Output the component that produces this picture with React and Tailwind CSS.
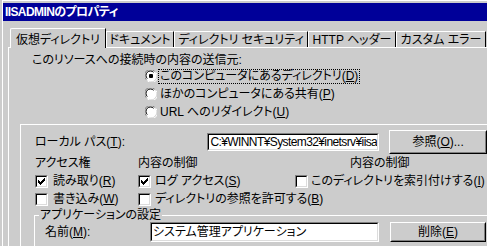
import React from "react";

const Check = ({ checked }) => (
  <span className="flex w-[13px] h-[13px] shrink-0 border border-t-[#808080] border-l-[#808080] border-r-white border-b-white">
    <span className="flex flex-1 items-center justify-center bg-white border border-t-black border-l-black border-r-[#dcdcdc] border-b-[#dcdcdc]">
      {checked && (
        <svg width="7" height="7" viewBox="0 0 7 7" shapeRendering="crispEdges">
          <rect x="6" y="0" width="1" height="1" fill="#000" />
          <rect x="5" y="1" width="2" height="1" fill="#000" />
          <rect x="0" y="2" width="1" height="1" fill="#000" />
          <rect x="4" y="2" width="3" height="1" fill="#000" />
          <rect x="0" y="3" width="2" height="1" fill="#000" />
          <rect x="3" y="3" width="3" height="1" fill="#000" />
          <rect x="0" y="4" width="5" height="1" fill="#000" />
          <rect x="1" y="5" width="3" height="1" fill="#000" />
          <rect x="2" y="6" width="1" height="1" fill="#000" />
        </svg>
      )}
    </span>
  </span>
);

const Radio = ({ checked }) => (
  <svg width="12" height="12" viewBox="0 0 12 12" className="shrink-0">
    <circle cx="6" cy="6" r="5.5" fill="#ffffff" />
    <path d="M1.2 9.6 A5.5 5.5 0 0 1 9.6 1.2" stroke="#808080" strokeWidth="1" fill="none" />
    <path d="M2.3 8.6 A4.3 4.3 0 0 1 8.6 2.3" stroke="#000000" strokeWidth="1" fill="none" />
    <path d="M10.8 2.4 A5.5 5.5 0 0 1 2.4 10.8" stroke="#ffffff" strokeWidth="1" fill="none" />
    {checked && <rect x="4" y="4" width="4" height="4" rx="1" fill="#000" />}
  </svg>
);

const Field = ({ className, children }) => (
  <div className={"flex border border-t-[#808080] border-l-[#808080] border-r-white border-b-white " + className}>
    <div className="flex flex-1 items-center bg-white border border-t-black border-l-black border-r-[#dcdcdc] border-b-[#dcdcdc] pl-[1px] overflow-hidden whitespace-nowrap">
      {children}
    </div>
  </div>
);

const Button = ({ className, children }) => (
  <div className={"flex border border-t-white border-l-white border-r-black border-b-black " + className}>
    <div className="flex flex-1 items-center justify-center border border-t-[#cccccc] border-l-[#cccccc] border-r-[#808080] border-b-[#808080] whitespace-nowrap">
      {children}
    </div>
  </div>
);

export default function App() {
  return (
    <div className="w-[487px] h-[246px] overflow-hidden bg-[#cccccc] text-black text-[12px] leading-[14px] font-['Liberation_Sans','Noto_Sans_CJK_JP',sans-serif] [font-feature-settings:'palt'] pl-[2px]">
      <div className="h-full border-t border-l border-white pt-[2px] flex flex-col">
        <div className="h-[18px] bg-[#000099] text-white font-bold tracking-[-0.6px] flex items-center pl-[2px] whitespace-nowrap">
          IISADMINのプロパティ
        </div>
        <div className="flex-1 pl-[5px] flex flex-col">
          <div className="mt-[7px] h-[19px] flex items-end whitespace-nowrap">
            <div className="ml-[2px] w-[96px] h-[20px] mb-[-1px] relative z-10 bg-[#cccccc] border-t border-l border-white border-r border-r-black rounded-tl-[2px] flex items-center justify-center pt-[2px]">
              仮想ディレクトリ
            </div>
            <div className="w-[68px] h-[16px] border-t border-l border-white border-r border-r-black flex items-center justify-center pt-[1px]">
              ドキュメント
            </div>
            <div className="w-[134px] h-[16px] border-t border-l border-white border-r border-r-black flex items-center justify-center pt-[1px]">
              ディレクトリ セキュリティ
            </div>
            <div className="w-[88px] h-[16px] border-t border-l border-white border-r border-r-black flex items-center justify-center pt-[1px]">
              HTTP ヘッダー
            </div>
            <div className="w-[90px] h-[16px] border-t border-l border-white border-r border-r-black flex items-center justify-center pt-[1px]">
              カスタム エラー
            </div>
          </div>
          <div className="flex-1 border-t border-l border-white pt-[5px] flex flex-col whitespace-nowrap">
            <div className="h-[14px] pl-[23px] flex items-center">このリソースへの接続時の内容の送信元:</div>
            <div className="ml-[136px] flex flex-col">
              <div className="h-[18px] flex items-center gap-[1px]">
                <Radio checked />
                <span className="border border-dotted border-black px-[1px] leading-[13px]">
                  このコンピュータにあるディレクトリ(<u>D</u>)
                </span>
              </div>
              <div className="h-[18px] flex items-center gap-[3px]">
                <Radio />
                <span>ほかのコンピュータにある共有(<u>P</u>)</span>
              </div>
              <div className="h-[18px] flex items-center gap-[3px]">
                <Radio />
                <span>URL へのリダイレクト(<u>U</u>)</span>
              </div>
            </div>
            <div className="mt-[3px] ml-[11px] flex-1 border-t border-l border-white flex flex-col pl-[14px]">
              <div className="mt-[5px] h-[24px] flex items-center">
                <span className="w-[180px]">ローカル パス(<u>T</u>):</span>
                <Field className="w-[178px] h-[18px]">
                  <span className="tracking-[-0.6px]">C:¥WINNT¥System32¥inetsrv¥iisa</span>
                </Field>
                <Button className="ml-[10px] w-[102px] h-[24px]">参照(<u>O</u>)...</Button>
              </div>
              <div className="mt-[2px] h-[14px] flex items-center">
                <span className="w-[103px]">アクセス権</span>
                <span className="w-[212px]">内容の制御</span>
                <span>内容の制御</span>
              </div>
              <div className="mt-[2px] h-[18px] flex items-center">
                <div className="w-[103px] flex items-center gap-[5px]">
                  <Check checked />
                  <span>読み取り(<u>R</u>)</span>
                </div>
                <div className="w-[157px] flex items-center gap-[4px]">
                  <Check checked />
                  <span>ログ アクセス(<u>S</u>)</span>
                </div>
                <div className="flex items-center gap-[3px]">
                  <Check />
                  <span>このディレクトリを索引付けする(<u>I</u>)</span>
                </div>
              </div>
              <div className="h-[18px] flex items-center">
                <div className="w-[103px] flex items-center gap-[5px]">
                  <Check />
                  <span>書き込み(<u>W</u>)</span>
                </div>
                <div className="flex items-center gap-[4px]">
                  <Check />
                  <span>ディレクトリの参照を許可する(<u>B</u>)</span>
                </div>
              </div>
              <fieldset className="ml-[-1px] flex-1 border-t border-l border-white p-0 m-0 min-w-0">
                <legend className="ml-[4px] px-[1px] leading-[14px]">アプリケーションの設定</legend>
                <div className="h-[20px] flex items-center pl-[10px]">
                  <span className="w-[105px]">名前(<u>M</u>):</span>
                  <Field className="w-[229px] h-[20px]">システム管理アプリケーション</Field>
                  <Button className="ml-[11px] w-[96px] h-[20px]">削除(<u>E</u>)</Button>
                </div>
              </fieldset>
            </div>
          </div>
        </div>
      </div>
    </div>
  );
}
